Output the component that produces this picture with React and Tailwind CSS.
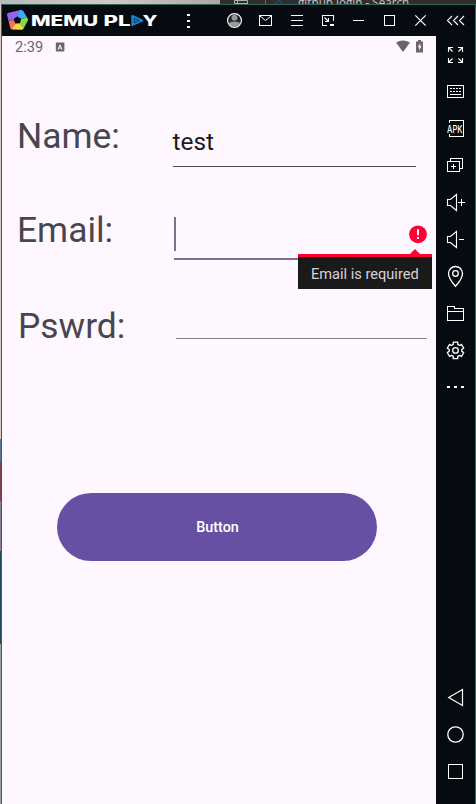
import React from "react";

function TitleIcon({ children }) {
  return (
    <svg className="h-[31px] w-[31px] shrink-0" viewBox="0 0 31 31" fill="none" stroke="#ffffff" strokeWidth="1">
      {children}
    </svg>
  );
}

function SideIcon({ children }) {
  return (
    <svg className="h-[37px] w-[39px] shrink-0" viewBox="0 0 39 37" fill="none" stroke="#ffffff" strokeWidth="1">
      {children}
    </svg>
  );
}

function Logo() {
  return (
    <svg className="h-[31px] w-[160px] shrink-0" viewBox="2 5 160 31">
      <defs>
        <clipPath id="pentagon">
          <path d="M8.6 12.7 L20.5 10 Q22.5 9.7 23.4 11.3 L27.6 18.2 Q28.4 19.6 27.6 21 L23.8 28.3 Q23 29.8 21.4 29.8 L12.6 29.6 Q10.8 29.6 10.3 28 L7 14.8 Q6.8 13.2 8.6 12.7Z" />
        </clipPath>
      </defs>
      <g clipPath="url(#pentagon)">
        <path d="M17.5 20 L6 20.8 V8 H18.5Z" fill="#9562f0" />
        <path d="M17.5 20 L18.5 8 H30 V16.5Z" fill="#45a6fb" />
        <path d="M17.5 20 L30 16.5 V31 H25Z" fill="#7edc49" />
        <path d="M17.5 20 L25.5 31 H11 L12 28Z" fill="#fed43c" />
        <path d="M17.5 20 L11.5 30 H6 V20.8Z" fill="#fb705f" />
      </g>
      <path d="M17.3 16.4 L21.1 18.8 L20 23.2 L15.2 23.4 L13.6 18.9Z" fill="#060b12" />
      <g fill="#ffffff" fontFamily="Inter, sans-serif" fontWeight="800" fontSize="15">
        <text x="31" y="26" textLength="67" lengthAdjust="spacingAndGlyphs">MEMU</text>
        <text x="103.5" y="26" textLength="27" lengthAdjust="spacingAndGlyphs">PL</text>
        <text x="142.5" y="26" textLength="15" lengthAdjust="spacingAndGlyphs">Y</text>
      </g>
      <path d="M132.3 16 L142.2 20.5 L132.3 25Z" fill="#1b82cc" stroke="#1b82cc" strokeWidth="2" strokeLinejoin="round" />
      <path d="M134.3 18.3 L139.2 20.5 L134.3 22.7Z" fill="#1b82cc" stroke="#0b3c60" strokeWidth="1" />
    </svg>
  );
}

function TitleBar() {
  return (
    <div className="flex h-[31px] shrink-0 bg-[#060b12]">
      <Logo />
      <svg className="h-[31px] w-[57px] shrink-0" viewBox="162 5 57 31" fill="#ffffff" shapeRendering="crispEdges">
        <rect x="187" y="14" width="3" height="2" />
        <rect x="187" y="20" width="3" height="2" />
        <rect x="187" y="26" width="3" height="2" />
      </svg>
      <TitleIcon>
        <circle cx="15.5" cy="15.5" r="5.8" fill="#25292e" stroke="none" />
        <circle cx="15.5" cy="12.7" r="2.9" fill="#97999b" stroke="none" />
        <path d="M10 18.3 Q11 16.5 15.5 16.5 Q20 16.5 21 18.3 Q19.5 21.8 15.5 21.8 Q11.5 21.8 10 18.3Z" fill="#97999b" stroke="none" />
        <circle cx="15.5" cy="15.5" r="6.9" strokeWidth="1.2" />
      </TitleIcon>
      <TitleIcon>
        <path d="M9.5 10.5 H21.5 V20.5 H9.5Z" shapeRendering="crispEdges" />
        <path d="M10 11 L15.5 15.5 L21 11" />
      </TitleIcon>
      <TitleIcon>
        <path d="M10 10.5 H22 M10 15.5 H22 M10 20.5 H22" shapeRendering="crispEdges" />
      </TitleIcon>
      <TitleIcon>
        <path d="M21.5 16 V10.5 H10.5 V20.5 H15" shapeRendering="crispEdges" />
        <path d="M12.5 12.5 L16.5 16.5 M16.5 13 V16.5 H13" strokeWidth="1.1" />
        <rect x="18" y="19" width="4" height="2" fill="#ffffff" stroke="none" />
      </TitleIcon>
      <TitleIcon>
        <path d="M10 15.5 H21" shapeRendering="crispEdges" />
      </TitleIcon>
      <TitleIcon>
        <path d="M10.5 10.5 H20.5 V20.5 H10.5Z" shapeRendering="crispEdges" />
      </TitleIcon>
      <TitleIcon>
        <path d="M10.3 10.3 L20.7 20.7 M20.7 10.3 L10.3 20.7" strokeWidth="1.2" />
      </TitleIcon>
      <svg className="h-[31px] w-[39px] shrink-0" viewBox="0 0 39 31" fill="none" stroke="#ffffff" strokeWidth="1.1">
        <path d="M16 11 L11.5 15.5 L16 20 M22 11 L17.5 15.5 L22 20 M28 11 L23.5 15.5 L28 20" />
      </svg>
    </div>
  );
}

function GearPath() {
  const pts = [];
  const teeth = 6;
  for (let i = 0; i < teeth; i++) {
    const a = (i * 2 * Math.PI) / teeth - Math.PI / 2;
    [[-0.36, 6.4], [-0.27, 8.5], [0.27, 8.5], [0.36, 6.4]].forEach(([d, r]) => {
      pts.push(`${(19.5 + r * Math.cos(a + d)).toFixed(2)},${(18.4 + r * Math.sin(a + d)).toFixed(2)}`);
    });
  }
  return <polygon points={pts.join(" ")} strokeWidth="1.3" strokeLinejoin="round" />;
}

function SideBar() {
  return (
    <div className="flex w-[39px] shrink-0 flex-col bg-[#060b12]">
      <SideIcon>
        <path
          d="M12.5 16 V11.5 H17 M12.5 11.5 L16.5 15.5 M22 11.5 H26.5 V16 M26.5 11.5 L22.5 15.5 M12.5 22 V26.5 H17 M12.5 26.5 L16.5 22.5 M22 26.5 H26.5 V22 M26.5 26.5 L22.5 22.5"
          strokeWidth="1.1"
        />
      </SideIcon>
      <SideIcon>
        <g shapeRendering="crispEdges">
          <path d="M11.5 12.5 H27.5 V24.5 H11.5Z" />
          <path d="M14 15.5 H26 M14 18.5 H26" strokeDasharray="2 1" />
          <path d="M14 21.5 H25" />
        </g>
      </SideIcon>
      <SideIcon>
        <path d="M13.5 13 V10.5 H27.5 V26.5 H13.5 V24" shapeRendering="crispEdges" />
        <text x="11" y="22.7" fontFamily="Inter, sans-serif" fontSize="10.5" fontWeight="500" textLength="15.5" lengthAdjust="spacingAndGlyphs" fill="#ffffff" stroke="none">APK</text>
      </SideIcon>
      <SideIcon>
        <g shapeRendering="crispEdges">
          <path d="M14.5 14 V11.5 H26.5 V21.5 H24" />
          <path d="M11.5 14.5 H23.5 V24.5 H11.5Z" />
          <path d="M15 19.5 H20 M17.5 17 V22" />
        </g>
      </SideIcon>
      <SideIcon>
        <path d="M11.5 15.5 H14.5 L20.5 10.5 V26.5 L14.5 21.5 H11.5Z" strokeWidth="1.1" />
        <path d="M22 18.5 H29 M25.5 15 V22" shapeRendering="crispEdges" />
      </SideIcon>
      <SideIcon>
        <path d="M11.5 15.5 H14.5 L20.5 10.5 V26.5 L14.5 21.5 H11.5Z" strokeWidth="1.1" />
        <path d="M23 18.5 H28" shapeRendering="crispEdges" />
      </SideIcon>
      <SideIcon>
        <path d="M19.5 28.3 Q12.5 20.5 12.5 15.5 A7 7 0 0 1 26.5 15.5 Q26.5 20.5 19.5 28.3Z" strokeWidth="1.3" />
        <circle cx="19.5" cy="15.5" r="2.8" strokeWidth="1.3" />
      </SideIcon>
      <SideIcon>
        <path d="M11.5 11.5 H18.5 V13.5 H27.5 V25.5 H11.5Z M11.5 16.5 H27.5" shapeRendering="crispEdges" />
      </SideIcon>
      <SideIcon>
        <GearPath />
        <circle cx="19.5" cy="18.4" r="2.8" strokeWidth="1.3" />
      </SideIcon>
      <SideIcon>
        <path d="M11 18 H14 M18 18 H21 M25 18 H28" strokeWidth="2" shapeRendering="crispEdges" />
      </SideIcon>
      <div className="mt-auto mb-[14px] flex flex-col">
        <SideIcon>
          <path d="M12.7 18.5 L26.5 10.5 V26.5Z" strokeWidth="1.2" />
        </SideIcon>
        <SideIcon>
          <circle cx="19.5" cy="18.5" r="7.7" strokeWidth="1.3" />
        </SideIcon>
        <SideIcon>
          <path d="M12.5 11.5 H26.5 V25.5 H12.5Z" shapeRendering="crispEdges" />
        </SideIcon>
      </div>
    </div>
  );
}

function StatusBar() {
  return (
    <div className="flex h-6 items-start pl-[13px] pr-[12px] text-[#69666b]">
      <span className="w-[40px] pt-[3px] text-[14.6px] leading-[17px]">2:39</span>
      <svg className="mt-[6px] h-[10px] w-[10px]" viewBox="0 0 10 10">
        <rect x="0.8" y="0.5" width="8.6" height="9" rx="1" fill="#69666b" />
        <path d="M3 7.5 L5 2.8 L7 7.5 M3.8 6 H6.2" stroke="#fef7ff" strokeWidth="1" fill="none" />
      </svg>
      <svg className="ml-auto mt-[4px] h-[13px] w-[28px]" viewBox="0 0 28 13">
        <path d="M0 2.6 Q7 -1.6 14 2.6 L7 12Z" fill="#69666b" />
        <path d="M20 1.5 H22 V0 H25 V1.5 H27 V12.4 H20Z" fill="#69666b" />
        <path d="M24.2 3 L21.8 7.3 H23.2 V10.5 L25.4 6.2 H24.2Z" fill="#fef7ff" />
      </svg>
    </div>
  );
}

function Field({ label, rowClass, labelClass, inputClass, children }) {
  return (
    <div className={"flex h-[54px] shrink-0 items-start " + rowClass}>
      <span className={"shrink-0 whitespace-nowrap text-[35.4px] leading-[42px] text-[#49454f] " + labelClass}>{label}</span>
      <div className={"ml-auto " + inputClass}>{children}</div>
    </div>
  );
}

function ErrorTip() {
  return (
    <>
      <svg className="absolute right-0 top-[16px] h-[19px] w-[18px]" viewBox="0 0 18 19">
        <circle cx="9" cy="9.3" r="8.9" fill="#ff0033" />
        <path d="M9 4.3 V10.2 M9 12 V14" stroke="#fef7ff" strokeWidth="2" />
      </svg>
      <div className="absolute -right-[5px] top-[45px] h-[35px] w-[134px] border-t-[3px] border-[#ff0033] bg-[#1a1a1a] pl-[13px] text-[14.6px] leading-[34px] text-[#d6d2d9] whitespace-nowrap">
        Email is required
        <svg className="absolute right-[12px] -top-[8px] h-[5px] w-[10px]" viewBox="0 0 10 5">
          <path d="M5 0 L10 5 H0Z" fill="#ff0033" />
        </svg>
      </div>
    </>
  );
}

function Phone() {
  return (
    <div className="flex w-[434px] shrink-0 flex-col bg-[#fef7ff]">
      <StatusBar />
      <Field label="Name:" labelClass="pt-px" rowClass="mt-[54px] pl-[15px]" inputClass="mr-[20px] mt-[13px] h-[40px] w-[243.5px] border-b border-[#504c55] text-[24.4px] leading-[30px] text-[#1d1b20]">
        test
      </Field>
      <Field label="Email:" labelClass="pt-0" rowClass="mt-[41px] pl-[15px]" inputClass="relative mr-[9px] h-[51px] w-[253px] border-b-2 border-[#797089]">
        <div className="mt-[8px] h-[34px] w-[2px] bg-[#7a718d]" />
        <ErrorTip />
      </Field>
      <Field label="Pswrd:" labelClass="pt-0" rowClass="mt-[42px] pl-[16px]" inputClass="mr-[9px] h-[34px] w-[251px] border-b border-[#88838b]" />
      <button className="ml-[55px] mt-[134px] h-[68px] w-[320px] rounded-full bg-[#6750a4] pl-px pt-[2px] text-[14.4px] font-medium text-white">Button</button>
    </div>
  );
}

function BackgroundStrip() {
  return (
    <div className="flex h-[4px] shrink-0 bg-[#2e2e2e]">
      <div className="h-[4px] w-[220px] shrink-0 bg-gradient-to-r from-[#b9b9bc] via-[#cbcbcd] to-[#a9a9ab]" />
      <svg className="h-[4px] w-[78px] shrink-0" viewBox="220 0 78 4" fill="none">
        <path d="M234.5 4 V0.5 H247.5 V4 M237.5 0 V4 M234 3.5 H248" stroke="#a8b5ad" />
        <path d="M265.5 0 V4" stroke="#686868" />
        <path d="M276 4 Q279 -2.5 282 4" stroke="#164a73" strokeWidth="1.5" />
      </svg>
      <span className="-mt-[5px] h-[15px] whitespace-pre font-['Open_Sans',sans-serif] text-[11.7px] leading-[15px] text-[#c5c5c5]">github login - Search</span>
    </div>
  );
}

export default function App() {
  return (
    <div className="flex h-[804px] w-[476px] flex-col overflow-hidden bg-[#060b12] font-['Roboto',sans-serif]">
      <BackgroundStrip />
      <div className="relative flex h-[800px]">
        <div className="flex w-px shrink-0 flex-col">
          <div className="h-[435px] bg-[#d9c9c5]" />
          <div className="h-[22px] bg-[#567894]" />
          <div className="h-[40px] bg-[#75444d]" />
          <div className="h-[50px] bg-[#858096]" />
          <div className="h-[93px] bg-[#244b58]" />
          <div className="flex-1 bg-[#9aa49b]" />
        </div>
        <div className="flex flex-1 flex-col border-x border-t border-[#376356]">
          <TitleBar />
          <div className="flex flex-1">
            <Phone />
            <SideBar />
          </div>
        </div>
      </div>
    </div>
  );
}
